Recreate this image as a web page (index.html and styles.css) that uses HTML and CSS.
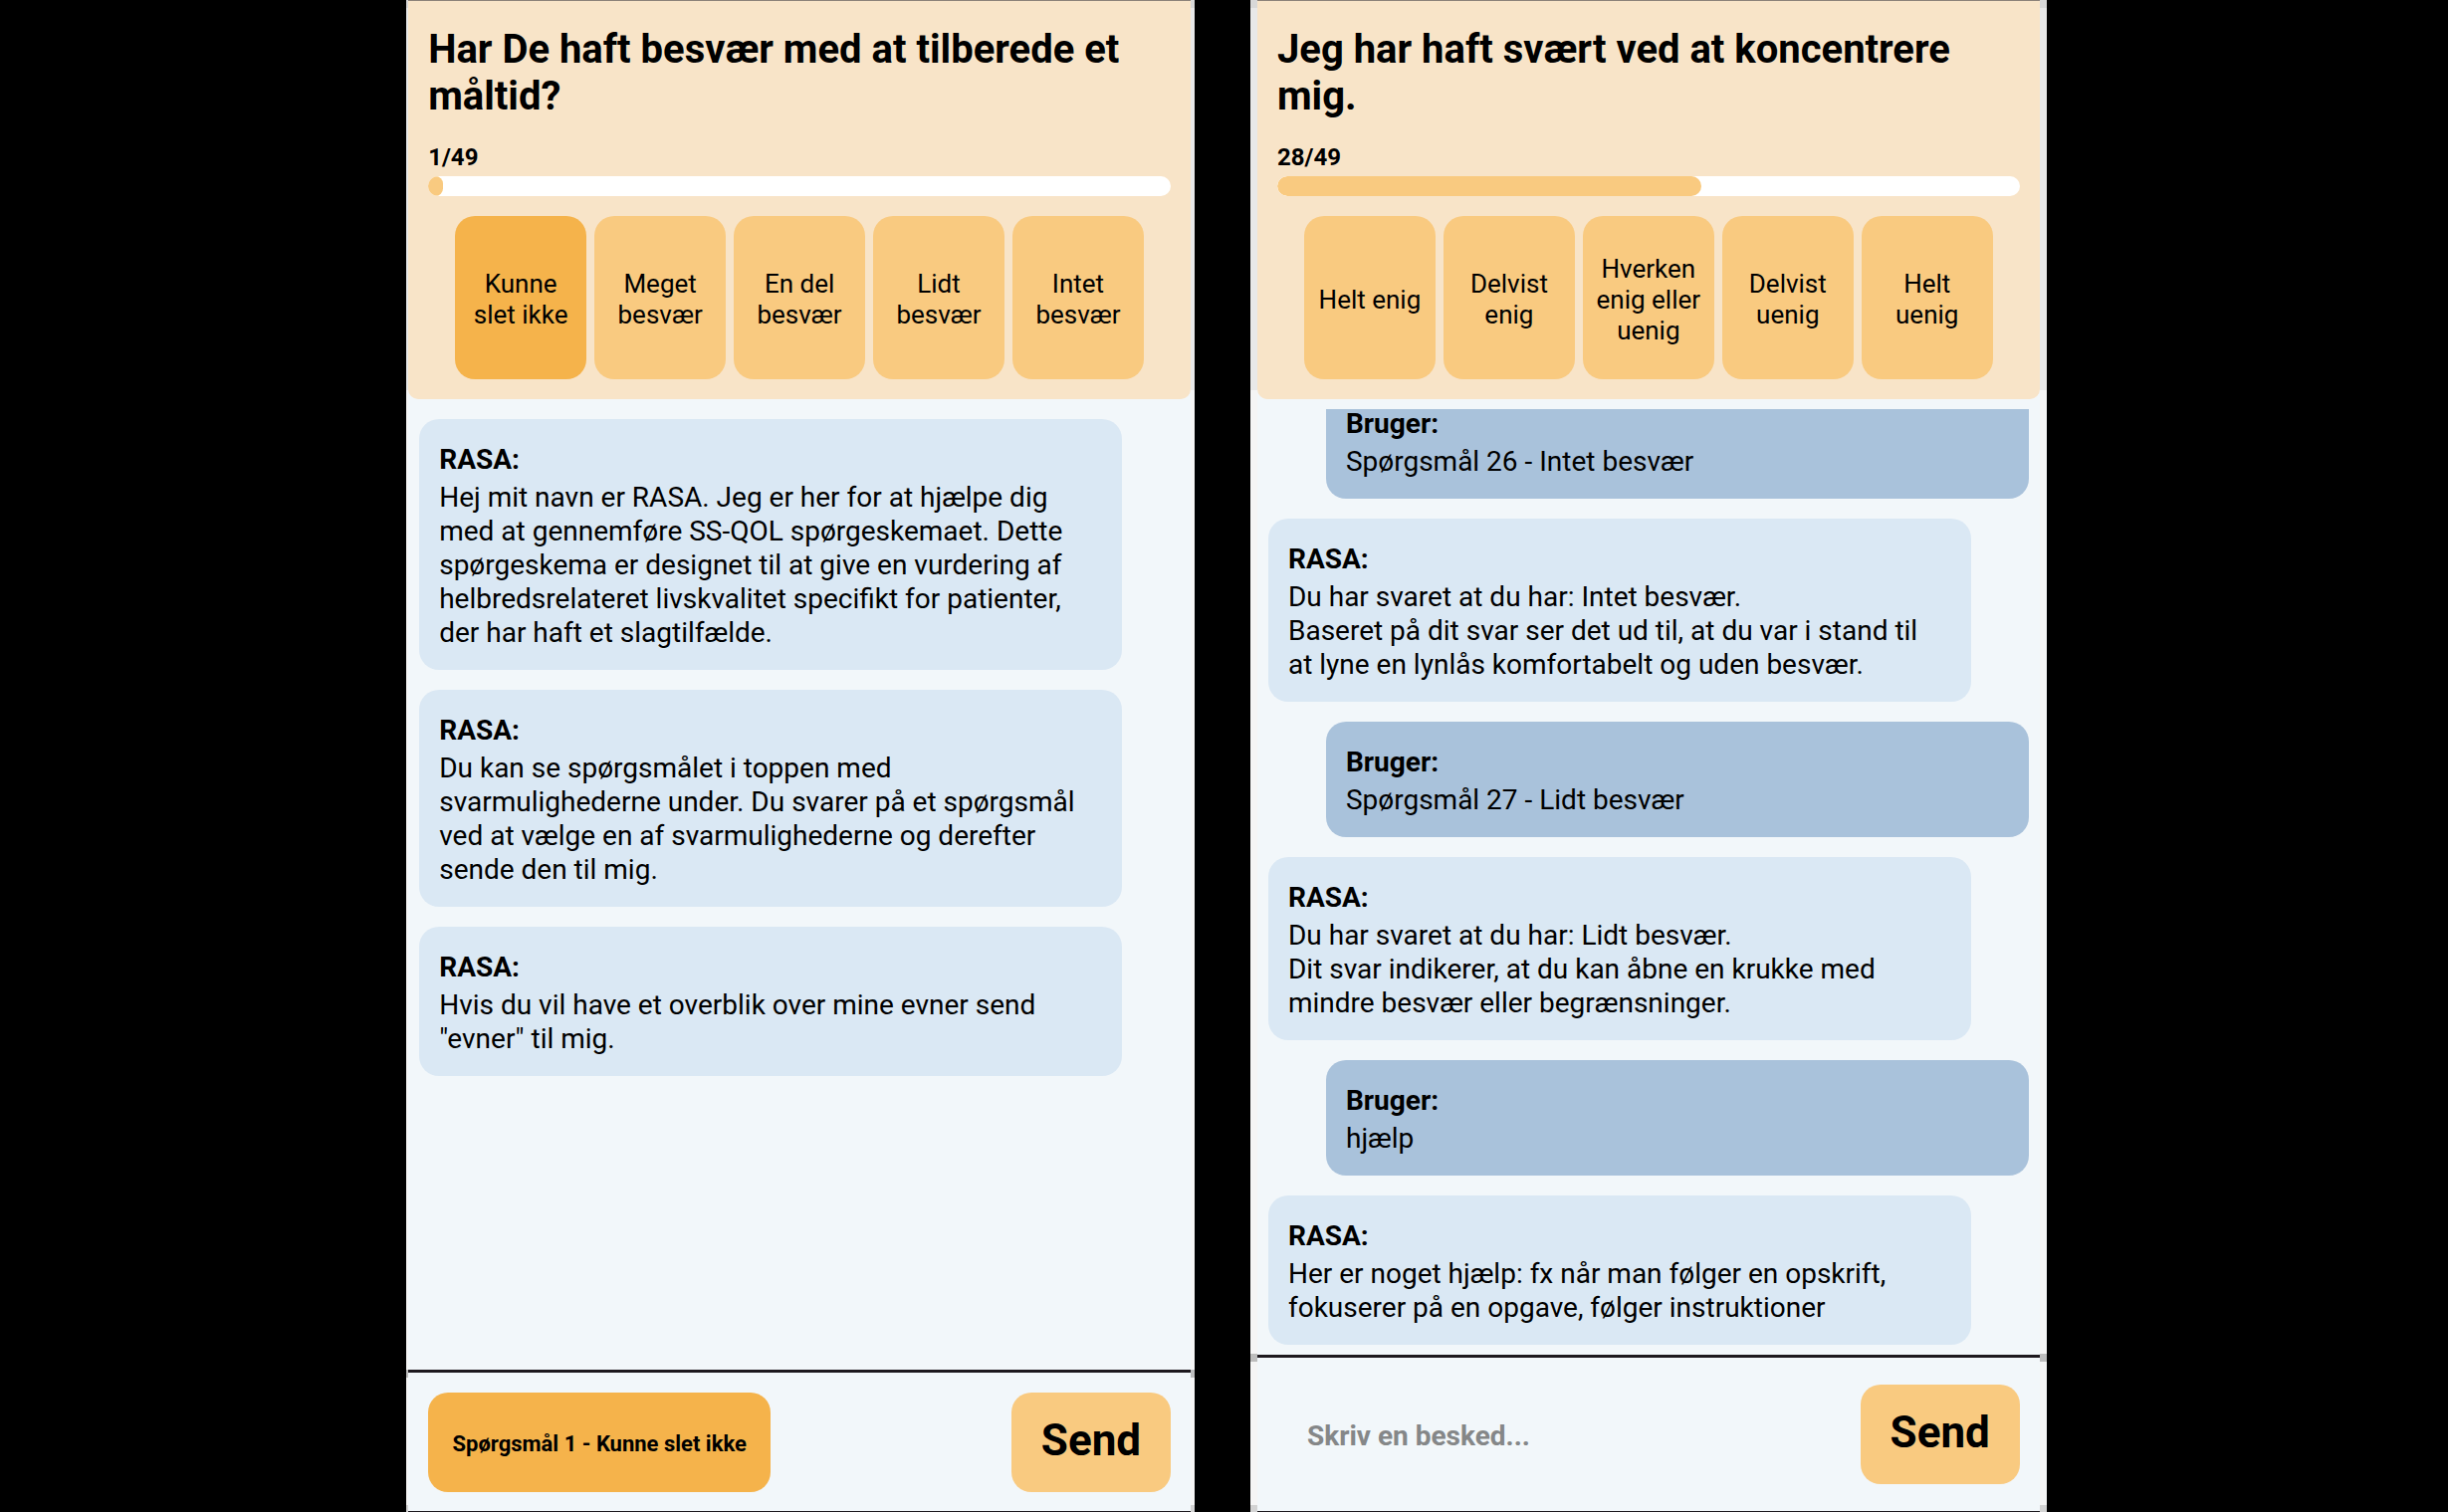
FILE: index.html
```html
<!DOCTYPE html>
<html lang="da">
<head>
<meta charset="utf-8">
<title>SS-QOL spørgeskema</title>
<link rel="stylesheet" href="styles.css">
</head>
<body>
<main class="stage">
  <section class="phone phone-start" aria-label="Spørgsmål 1">
    <div class="screen">
      <header class="question">
        <h1 class="question-title">Har De haft besvær med at tilberede et måltid?</h1>
        <p class="counter">1/49</p>
        <div class="progress" role="progressbar" aria-label="Fremgang" aria-valuemin="0" aria-valuemax="49" aria-valuenow="1"><div class="progress-fill" style="width:2%"></div></div>
        <div class="options">
          <button type="button" class="option option-selected">Kunne slet ikke</button>
          <button type="button" class="option">Meget besvær</button>
          <button type="button" class="option">En del besvær</button>
          <button type="button" class="option">Lidt besvær</button>
          <button type="button" class="option">Intet besvær</button>
        </div>
      </header>
      <div class="log">
        <article class="bubble"><h2 class="sender">RASA:</h2><p class="text">Hej mit navn er RASA. Jeg er her for at hjælpe dig med at gennemføre SS-QOL spørgeskemaet. Dette spørgeskema er designet til at give en vurdering af helbredsrelateret livskvalitet specifikt for patienter, der har haft et slagtilfælde.</p></article>
        <article class="bubble"><h2 class="sender">RASA:</h2><p class="text">Du kan se spørgsmålet i toppen med svarmulighederne under. Du svarer på et spørgsmål ved at vælge en af svarmulighederne og derefter sende den til mig.</p></article>
        <article class="bubble"><h2 class="sender">RASA:</h2><p class="text">Hvis du vil have et overblik over mine evner send "evner" til mig.</p></article>
      </div>
      <form class="composer">
        <button type="button" class="answer">Spørgsmål 1 - Kunne slet ikke</button>
        <button type="button" class="send">Send</button>
      </form>
    </div>
  </section>

  <section class="phone phone-later" aria-label="Spørgsmål 28">
    <div class="screen">
      <header class="question">
        <h1 class="question-title">Jeg har haft svært ved at koncentrere mig.</h1>
        <p class="counter">28/49</p>
        <div class="progress" role="progressbar" aria-label="Fremgang" aria-valuemin="0" aria-valuemax="49" aria-valuenow="28"><div class="progress-fill" style="width:57.14%"></div></div>
        <div class="options">
          <button type="button" class="option">Helt enig</button>
          <button type="button" class="option">Delvist enig</button>
          <button type="button" class="option">Hverken enig eller uenig</button>
          <button type="button" class="option">Delvist uenig</button>
          <button type="button" class="option">Helt uenig</button>
        </div>
      </header>
      <div class="log log-scrolled">
        <article class="bubble bubble-user"><h2 class="sender">Bruger:</h2><p class="text">Spørgsmål 26 - Intet besvær</p></article>
        <article class="bubble"><h2 class="sender">RASA:</h2><p class="text">Du har svaret at du har: Intet besvær.<br>Baseret på dit svar ser det ud til, at du var i stand til at lyne en lynlås komfortabelt og uden besvær.</p></article>
        <article class="bubble bubble-user"><h2 class="sender">Bruger:</h2><p class="text">Spørgsmål 27 - Lidt besvær</p></article>
        <article class="bubble"><h2 class="sender">RASA:</h2><p class="text">Du har svaret at du har: Lidt besvær.<br>Dit svar indikerer, at du kan åbne en krukke med mindre besvær eller begrænsninger.</p></article>
        <article class="bubble bubble-user"><h2 class="sender">Bruger:</h2><p class="text">hjælp</p></article>
        <article class="bubble"><h2 class="sender">RASA:</h2><p class="text">Her er noget hjælp: fx når man følger en opskrift, fokuserer på en opgave, følger instruktioner</p></article>
      </div>
      <form class="composer composer-tall">
        <input class="message" type="text" aria-label="Besked" placeholder="Skriv en besked...">
        <button type="button" class="send">Send</button>
      </form>
    </div>
  </section>
</main>
</body>
</html>
```
FILE: styles.css
```css
* { box-sizing: border-box; }

body {
  margin: 0;
  background: #000;
  color: #000;
  font-family: Roboto, "Liberation Sans", sans-serif;
}

h1, h2, p { margin: 0; }

button, input {
  border: 0;
  color: inherit;
  font-family: inherit;
}

/* Two phones side by side, with black on either side */
.stage {
  display: grid;
  grid-template-columns: 792fr 800fr;
  gap: 56px;
  height: 100vh;
  padding: 0 16.4% 0 16.6%;
}

/* The narrow grey edges change tone at the header and the composer */
.phone {
  --composer: 143px;
  display: flex;
  min-width: 0;
  min-height: 0;
  background: linear-gradient(
    #d8d8d8 8px,
    #e8e8e8 8px 392px,
    #f5f5f5 392px calc(100% - var(--composer)),
    #bdbdbd calc(100% - var(--composer)) calc(100% - var(--composer) + 8px),
    #f5f5f5 calc(100% - var(--composer) + 8px) calc(100% - 7px),
    #d3d3d3 calc(100% - 7px));
}

.phone-start { padding: 0 4px 0 2px; }

.phone-later {
  --composer: 159px;
  padding: 0 7px;
}

.screen {
  display: flex;
  flex: 1 1 0;
  flex-direction: column;
  min-width: 0;
  background: #f2f7fa;
}

.question {
  padding: 25px 20px 20px;
  border-top: 1px solid #8c8279;
  border-radius: 0 0 10px 10px;
  background: #f8e4c8;
}

.question-title {
  font-size: 40px;
  line-height: 47px;
  font-weight: 700;
}

.counter {
  margin-top: 24px;
  font-size: 24px;
  line-height: 28px;
  font-weight: 700;
}

.progress {
  height: 20px;
  margin-top: 5px;
  overflow: hidden;
  border-radius: 10px;
  background: #fff;
}

.progress-fill {
  height: 100%;
  border-radius: 10px;
  background: #f9ca80;
}

.options {
  display: flex;
  gap: 8px;
  margin-top: 20px;
  padding: 0 27px;
}

.option {
  flex: 1 1 0;
  height: 164px;
  padding: 4px 12px 0;
  border-radius: 20px;
  background: #f9ca80;
  font-size: 26px;
  line-height: 31px;
}

.option-selected { background: #f5b34b; }

.log {
  display: flex;
  flex: 1 1 0;
  flex-direction: column;
  gap: 20px;
  min-height: 0;
  margin-top: 10px;
  padding: 10px 11px;
  overflow: hidden;
}

/* Scrolled to the newest message */
.log-scrolled { justify-content: flex-end; }

.bubble {
  flex: none;
  margin-right: 58px;
  padding: 24px 36px 20px 20px;
  border-radius: 20px;
  background: #dae8f4;
  font-size: 28px;
  line-height: 34px;
}

.bubble-user {
  margin-right: 0;
  margin-left: 58px;
  background: #a9c2db;
}

.sender {
  margin-bottom: 4px;
  font-size: inherit;
  font-weight: 700;
}

.composer {
  display: flex;
  align-items: center;
  justify-content: space-between;
  padding: 20px 20px 19px;
  border-top: 3px solid #1d191e;
  border-bottom: 1px solid #1d191e;
}

.composer-tall { padding: 27px 20px; }

.answer {
  min-width: 344px;
  height: 100px;
  padding: 2px 20px 0;
  border-radius: 20px;
  background: #f5b34b;
  font-size: 22px;
  font-weight: 700;
}

.send {
  flex: none;
  width: 160px;
  height: 100px;
  padding: 0 0 4px;
  border-radius: 20px;
  background: #f9ca80;
  font-size: 44px;
  font-weight: 700;
}

.message {
  flex: 1 1 0;
  min-width: 0;
  height: 100px;
  padding: 2px 30px 0;
  background: transparent;
  font-size: 28px;
  font-weight: 700;
}

.message::placeholder {
  color: #858788;
  opacity: 1;
}
```
